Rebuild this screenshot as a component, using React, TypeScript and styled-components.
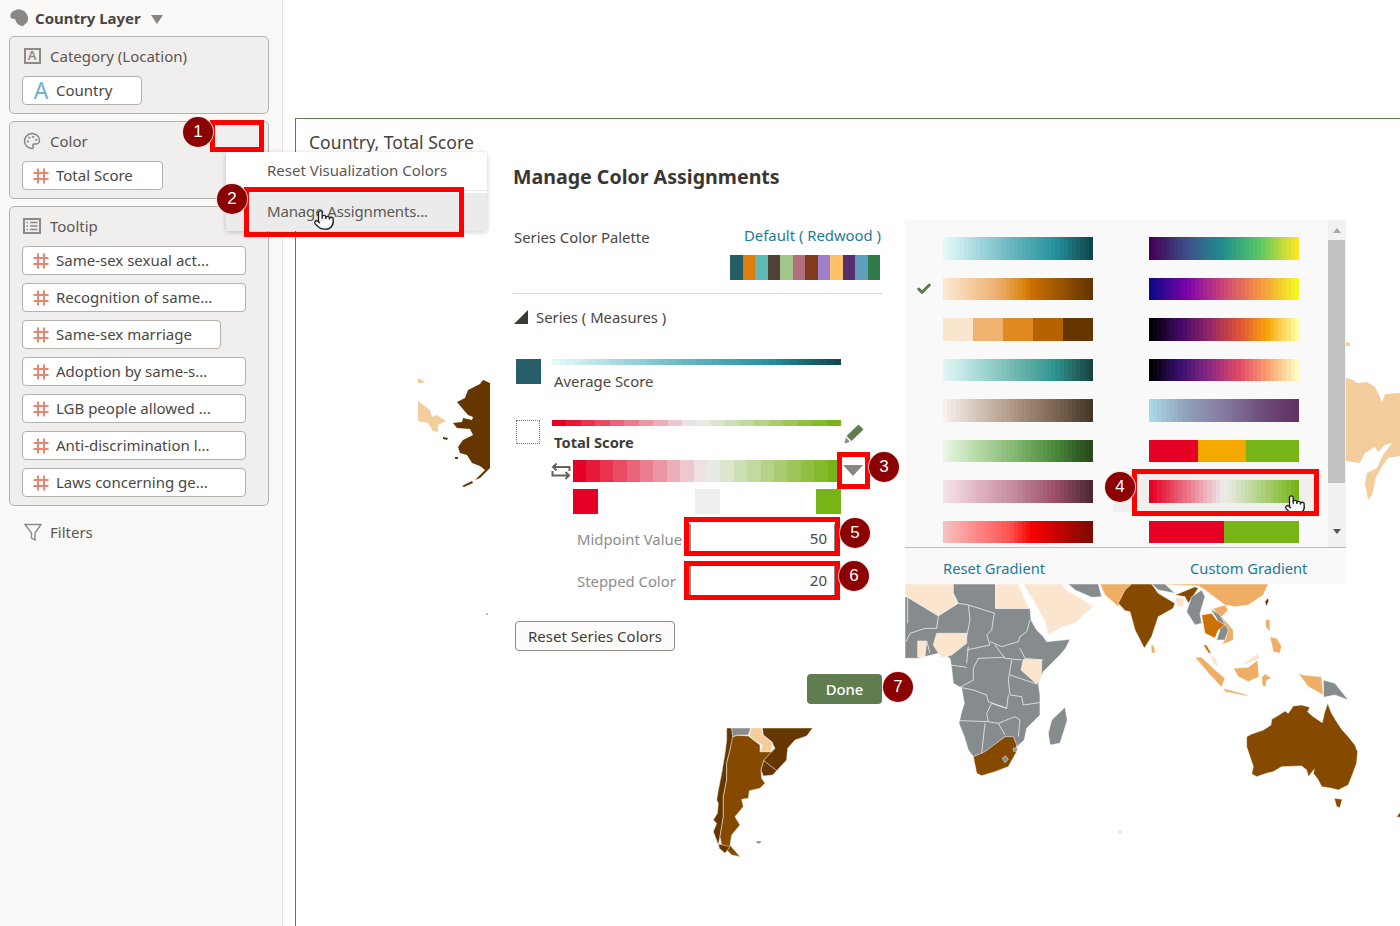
import React from 'react';
import styled, { createGlobalStyle } from 'styled-components';
import { Palette, Pointer, Check } from 'lucide-react';

const Global = createGlobalStyle`
  html, body { margin: 0; padding: 0; background: #fff; }
  body { font-family: "Noto Sans", "Open Sans", sans-serif; color: #4b4743; }
  * { box-sizing: border-box; }
`;

/* ---------- colour ramps ---------- */
const hex = (c: string) => [1, 3, 5].map((i) => parseInt(c.slice(i, i + 2), 16));
const stepped = (stops: string[], n: number, positions?: number[]) => {
  const pos = positions ?? stops.map((_, i) => i / (stops.length - 1));
  const out: string[] = [];
  for (let i = 0; i < n; i++) {
    const t = n === 1 ? 0 : i / (n - 1);
    let k = 0;
    while (k < stops.length - 2 && t > pos[k + 1]) k++;
    const f = (t - pos[k]) / (pos[k + 1] - pos[k]);
    const a = hex(stops[k]);
    const b = hex(stops[k + 1]);
    const m = a.map((v, j) => Math.round(v + (b[j] - v) * f));
    const from = (i / n) * 100;
    const to = ((i + 1) / n) * 100;
    out.push(`rgb(${m.join(',')}) ${from}% ${to}%`);
  }
  return `linear-gradient(90deg, ${out.join(',')})`;
};
const hard = (pairs: [string, number][]) => {
  const total = pairs.reduce((s, p) => s + p[1], 0);
  let acc = 0;
  const out = pairs.map(([c, w]) => {
    const a = (acc / total) * 100;
    acc += w;
    return `${c} ${a}% ${(acc / total) * 100}%`;
  });
  return `linear-gradient(90deg, ${out.join(',')})`;
};

const teal = ['#e4f8fa', '#9ed4db', '#5fb0bb', '#26939f', '#0f474d'];
const rdGn = ['#e60023', '#eeeeee', '#76b417'];

const leftRamps = [
  stepped(teal, 36),
  stepped(['#fbe8d2', '#eeb070', '#d9820f', '#c96f00', '#653600'], 36, [0, 0.35, 0.55, 0.6, 1]),
  hard([['#fae6cf', 1], ['#f0b36f', 1], ['#e08921', 1], ['#b56200', 1], ['#653600', 1]]),
  stepped(['#e0f5f5', '#a3d8d3', '#6cb5ac', '#2f9690', '#1a4443'], 36),
  stepped(['#f7f0ed', '#cfbfb1', '#a9927e', '#7d6753', '#443729'], 36),
  stepped(['#e8f5e0', '#b2d6a2', '#7fb36c', '#4a8a3a', '#26481a'], 36),
  stepped(['#f5e2e8', '#dcb0c0', '#c08598', '#9c5068', '#4e2935'], 36),
  stepped(['#f5c0bf', '#ff8080', '#ff5050', '#f50000', '#7f0a00'], 36, [0, 0.25, 0.45, 0.6, 1]),
];
const rightRamps = [
  stepped(['#440154', '#3b528b', '#21908c', '#5dc863', '#fde725'], 36),
  stepped(['#0d0887', '#7e03a8', '#cc4778', '#f89540', '#f0f921'], 36),
  stepped(['#000004', '#420a68', '#932667', '#dd513a', '#fca50a', '#fcffa4'], 36),
  stepped(['#000004', '#3b0f70', '#8c2981', '#de4968', '#fe9f6d', '#fcfdbf'], 36),
  stepped(['#a9d8e6', '#8f9fb8', '#857aa0', '#6e4f7c', '#643163'], 36),
  hard([['#e60023', 49], ['#f5a800', 48], ['#76b417', 53]]),
  stepped(rdGn, 36),
  hard([['#e60023', 1], ['#76b417', 1]]),
];

/* ---------- shell ---------- */
const Page = styled.div`
  position: relative;
  display: flex;
  width: 1400px;
  height: 926px;
  overflow: hidden;
  background: #fff;
`;
const Sidebar = styled.aside`
  display: flex;
  flex-direction: column;
  width: 283px;
  flex: none;
  padding: 0 13px 0 9px;
  background: #fbf9f8;
  border-right: 1px solid #e6e4e2;
`;
const LayerHeader = styled.div`
  display: flex;
  align-items: center;
  height: 36px;
  padding-left: 1px;
  font-size: 15px;
  font-weight: 700;
  color: #4a4541;
`;
const LayerName = styled.span`
  margin-left: 7px;
`;
const HeaderCaret = styled.span`
  width: 0;
  height: 0;
  margin: 2px 0 0 10px;
  border-left: 6px solid transparent;
  border-right: 6px solid transparent;
  border-top: 9px solid #8a8580;
`;
const Panel = styled.section`
  display: flex;
  flex-direction: column;
  gap: 8px;
  padding: 0 0 8px 12px;
  background: #f1efed;
  border: 1px solid #b4b0ac;
  border-radius: 5px;
  & + & {
    margin-top: 7px;
  }
`;
const PanelTitle = styled.div`
  display: flex;
  align-items: center;
  gap: 9px;
  height: 31px;
  margin: 0 0 0 1px;
  padding: 7px 0 1px;
  font-size: 15px;
  color: #5b5651;
`;
const IconSlot = styled.span`
  display: flex;
  align-items: center;
  justify-content: center;
  width: 18px;
  height: 18px;
  flex: none;
  color: #8a8581;
`;
const LetterBox = styled.span`
  display: flex;
  align-items: center;
  justify-content: center;
  width: 17px;
  height: 16px;
  border: 2px solid #8f8a86;
  font-size: 13px;
  font-weight: 600;
  line-height: 1;
  color: #8f8a86;
`;
const Pill = styled.div<{ $w: number }>`
  display: flex;
  align-items: center;
  width: ${(p) => p.$w}px;
  height: 29px;
  padding: 0 0 2px 10px;
  background: #fff;
  border: 1px solid #b4b0ac;
  border-radius: 4px;
  font-size: 15px;
  color: #4b4743;
  white-space: nowrap;
`;
const PillGlyph = styled.span`
  display: flex;
  align-items: center;
  justify-content: center;
  width: 16px;
  height: 20px;
  margin: 2px 7px 0 0;
  flex: none;
  font-size: 23px;
  line-height: 1;
  color: #6fb0d4;
`;
const Filters = styled(PanelTitle)`
  gap: 8px;
  height: 22px;
  margin: 16px 0 0 15px;
  padding: 0 0 2px;
`;

/* ---------- visualization ---------- */
const Main = styled.main`
  flex: 1;
  min-width: 0;
  padding: 118px 0 0 12px;
`;
const Viz = styled.div`
  position: relative;
  height: 100%;
  border-top: 1px solid #5f7d4f;
  border-left: 1px solid #5f7d4f;
  overflow: hidden;
`;
const VizTitle = styled.h2`
  position: relative;
  margin: 0;
  padding: 10px 0 0 13px;
  font-size: 17.6px;
  line-height: 26px;
  font-weight: 400;
  color: #46423f;
`;
const MapSvg = styled.svg`
  position: absolute;
  inset: 0;
  width: 1104px;
  height: 807px;
`;

/* ---------- dialog ---------- */
const Dialog = styled.div`
  position: absolute;
  left: 194px;
  top: 36px;
  display: flex;
  align-items: flex-start;
`;
const Form = styled.div`
  display: flex;
  flex-direction: column;
  width: 415px;
  height: 573px;
  padding: 8px 23px 0;
  background: #fff;
  font-size: 14.85px;
  color: #4b4743;
`;
const Heading = styled.h1`
  margin: 0;
  font-size: 19.6px;
  line-height: 28px;
  font-weight: 700;
  color: #3a3632;
`;
const PaletteRow = styled.div`
  display: flex;
  justify-content: space-between;
  margin: 34px 0 0 1px;
`;
const RowLabel = styled.span`
  line-height: 24px;
`;
const PaletteRight = styled.div`
  display: flex;
  flex-direction: column;
  align-items: flex-end;
  padding-right: 1px;
`;
const Link = styled.a`
  line-height: 20px;
  color: #1e7a9c;
`;
const PaletteStrip = styled.div`
  display: flex;
  width: 150px;
  height: 25px;
  margin: 10px 1px 0 0;
`;
const PaletteChip = styled.span<{ $c: string }>`
  flex: 1;
  background: ${(p) => p.$c};
`;
const Divider = styled.hr`
  width: 100%;
  height: 1px;
  margin: 13px 0 0;
  border: 0;
  background: #d9d9d9;
`;
const SeriesHead = styled.div`
  display: flex;
  align-items: center;
  gap: 8px;
  height: 24px;
  margin: 12px 0 0 1px;
  padding-bottom: 2px;
`;
const Corner = styled.span`
  width: 0;
  height: 0;
  border-left: 14px solid transparent;
  border-bottom: 14px solid #3d3a36;
`;
const SeriesItem = styled.div<{ $gap: number }>`
  display: flex;
  gap: 11px;
  margin: ${(p) => p.$gap}px 0 0 3px;
`;
const SeriesSwatch = styled.div`
  width: 25px;
  height: 25px;
  flex: none;
  background: #265f69;
`;
const DottedSwatch = styled.div`
  width: 24px;
  height: 24px;
  margin-right: 1px;
  flex: none;
  border: 1px dotted #77736f;
`;
const SeriesBody = styled.div`
  display: flex;
  flex-direction: column;
  width: 289px;
`;
const Ramp = styled.div<{ $bg: string; $h: number }>`
  position: relative;
  width: 100%;
  height: ${(p) => p.$h}px;
  background: ${(p) => p.$bg};
`;
const SeriesLabelRow = styled.div`
  display: flex;
  justify-content: space-between;
  margin: 5px 0 0 2px;
  line-height: 22px;
`;
const BoldLabel = styled.span`
  font-size: 14.7px;
  font-weight: 700;
  color: #3f3b38;
`;
const PencilBox = styled.svg`
  width: 20px;
  height: 20px;
  margin: -7px -23px 0 0;
  flex: none;
`;
const EditorRow = styled.div`
  display: flex;
  align-items: center;
  margin: 7px 0 0 -1px;
`;
const SwapBox = styled.svg`
  width: 20px;
  height: 18px;
  margin-right: 2px;
  flex: none;
`;
const EditorRamp = styled.div`
  width: 268px;
  flex: none;
`;
const DropCaret = styled.span`
  width: 0;
  height: 0;
  flex: none;
  margin: -1px 0 0 2px;
  border-left: 10px solid transparent;
  border-right: 10px solid transparent;
  border-top: 11px solid #8a8580;
`;
const StopsRow = styled.div`
  display: flex;
  justify-content: space-between;
  width: 268px;
  margin: 7px 0 0 21px;
`;
const Stop = styled.span<{ $c: string }>`
  width: 25px;
  height: 25px;
  background: ${(p) => p.$c};
`;
const FieldRow = styled.div<{ $gap: number }>`
  display: flex;
  align-items: center;
  margin: ${(p) => p.$gap}px 0 0 25px;
`;
const FieldLabel = styled.label`
  width: 112px;
  flex: none;
  color: #8c8c8c;
  white-space: nowrap;
`;
const FieldInput = styled.input`
  width: 146px;
  height: 29px;
  padding: 0 7px 2px 0;
  border: 0;
  border-left: 2px solid #8a8a8a;
  border-right: 1px solid #8a8a8a;
  background: #fff;
  font: inherit;
  font-size: 15px;
  color: #4b4743;
  text-align: right;
  outline: none;
`;
const ResetButton = styled.button`
  width: 160px;
  height: 30px;
  margin: 26px 0 0 2px;
  padding: 0;
  background: #fcfbfa;
  border: 1px solid #8e8a86;
  border-radius: 4px;
  font: inherit;
  font-size: 15px;
  color: #3f3b38;
`;
const DoneButton = styled.button`
  align-self: flex-end;
  width: 75px;
  height: 30px;
  margin-top: 23px;
  padding: 0;
  background: #5f7d4f;
  border: 0;
  border-radius: 4px;
  font: inherit;
  font-weight: 500;
  color: #fff;
`;

/* ---------- gradient picker ---------- */
const Picker = styled.div`
  display: flex;
  flex-direction: column;
  width: 441px;
  height: 364px;
  margin-top: 65px;
  background: #f9f9f9;
`;
const PickerBody = styled.div`
  display: flex;
  height: 327px;
`;
const RampGrid = styled.div`
  display: grid;
  flex: 1;
  grid-template-columns: 38px 206px 150px;
  grid-auto-rows: 22.5px;
  row-gap: 18px;
  padding-top: 17px;
  overflow: hidden;
`;
const CheckCell = styled.div`
  display: flex;
  align-items: center;
  padding: 0 0 0 11px;
  color: #5f7d4f;
`;
const RampCell = styled.div<{ $w: number; $on?: boolean }>`
  position: relative;
  width: ${(p) => p.$w}px;
  ${(p) =>
    p.$on
      ? `&::before { content: ''; position: absolute; inset: -9px -20px -9px -36px; background: #f0efee; }`
      : ''}
`;
const Scrollbar = styled.div`
  display: flex;
  flex-direction: column;
  align-items: center;
  width: 18px;
  flex: none;
  background: #f1f1f1;
`;
const ArrowUp = styled.span`
  width: 0;
  height: 0;
  margin: 8px 0 7px;
  border-left: 4px solid transparent;
  border-right: 4px solid transparent;
  border-bottom: 5px solid #a8a8a8;
`;
const Thumb = styled.span`
  width: 17px;
  height: 243px;
  margin-right: 1px;
  background: #c1c1c1;
`;
const ArrowDown = styled.span`
  width: 0;
  height: 0;
  margin-top: 46px;
  border-left: 4px solid transparent;
  border-right: 4px solid transparent;
  border-top: 5px solid #555;
`;
const PickerFooter = styled.div`
  display: flex;
  align-items: center;
  gap: 145px;
  height: 37px;
  padding: 3px 0 0 38px;
  border-top: 1px solid #bdbdbd;
  font-size: 14.7px;
`;

/* ---------- overlays ---------- */
const Menu = styled.div`
  position: absolute;
  left: 226px;
  top: 152px;
  display: flex;
  flex-direction: column;
  width: 261px;
  height: 79px;
  background: #fff;
  border-radius: 3px;
  box-shadow: 0 1px 5px rgba(0, 0, 0, 0.22);
  font-size: 15px;
  color: #5c5854;
`;
const MenuItem = styled.div<{ $active?: boolean }>`
  display: flex;
  align-items: center;
  flex: 1;
  padding: 0 0 2px 41px;
  letter-spacing: ${(p) => (p.$active ? '-0.15px' : '0')};
  background: ${(p) => (p.$active ? '#ebebeb' : 'transparent')};
  border-top: ${(p) => (p.$active ? '2px solid #fff' : '0')};
  box-shadow: ${(p) => (p.$active ? '0 -1px 0 #e8e8e8' : 'none')};
`;
const Callout = styled.div<{ $x: number; $y: number; $w: number; $h: number; $b: number }>`
  position: absolute;
  left: ${(p) => p.$x}px;
  top: ${(p) => p.$y}px;
  width: ${(p) => p.$w}px;
  height: ${(p) => p.$h}px;
  border: ${(p) => p.$b}px solid #ff0000;
`;
const Badge = styled.div<{ $cx: number; $cy: number }>`
  position: absolute;
  left: ${(p) => p.$cx - 15}px;
  top: ${(p) => p.$cy - 15}px;
  display: flex;
  align-items: center;
  justify-content: center;
  width: 30px;
  height: 30px;
  border-radius: 50%;
  background: #8b0000;
  box-shadow: 0 0 0 1px rgba(240, 225, 225, 0.8);
  font-family: "Liberation Sans", Arial, sans-serif;
  font-size: 17px;
  color: #fff;
`;
const Hand = styled.div<{ $x: number; $y: number }>`
  position: absolute;
  left: ${(p) => p.$x}px;
  top: ${(p) => p.$y}px;
  display: flex;
  color: #222;
`;

/* ---------- icons ---------- */
const Hash = () => (
  <svg width="16" height="16" viewBox="0 0 16 16" fill="none" stroke="#e8856f" strokeWidth="2">
    <path d="M5 0.5V15.5M11 0.5V15.5M0.5 5H15.5M0.5 11H15.5" />
  </svg>
);
const LayerBlob = () => (
  <svg width="18" height="18" viewBox="0 0 18 18">
    <path
      d="M0.5 6 C1 3 4 1.5 6 1 C7 0 10 0 12 1 C15 2 17 5 18 8 C18.5 11 17.5 14 15 15 C13.5 17 12 18 10.5 16.5 C8 15.5 6 14 5.5 11 C5 9.5 3 10.5 1.5 9.5 C0.5 8.5 0.3 7.5 0.5 6 Z"
      fill="#8b8785"
    />
  </svg>
);
const ListBox = () => (
  <svg width="18" height="16" viewBox="0 0 18 16" fill="none" stroke="#8f8a86">
    <rect x="1" y="1" width="16" height="14" strokeWidth="2" />
    <path d="M3.5 4.5H5M3.5 8H5M3.5 11.5H5M7 4.5H14.5M7 8H14.5M7 11.5H14.5" strokeWidth="1.4" />
  </svg>
);
const Funnel = () => (
  <svg width="18" height="18" viewBox="0 0 18 18" fill="none" stroke="#8f8a86" strokeWidth="1.4">
    <path d="M1 1.5H17L11 10V17L7.5 15V10Z" />
  </svg>
);
const Pencil = () => (
  <PencilBox viewBox="0 0 20 20">
    <path d="M14.5 0.5L19.5 5.5L7.5 17L2.5 12Z" fill="#5f7d4f" />
    <path d="M1.8 13.5L6 17.8L0.5 19.5Z" fill="#7d9770" />
  </PencilBox>
);
const Swap = () => (
  <SwapBox viewBox="0 0 20 18" fill="none" stroke="#66615c" strokeWidth="2">
    <path d="M2 5H18.5V9M5.5 1.5L2 5L5.5 8.5" />
    <path d="M1.5 9V13.5H18M14.5 10L18 13.5L14.5 17" />
  </SwapBox>
);

/* ---------- map (coordinates traced per reference crop) ---------- */
type Shape = { f: string; p: string };
const GRAY = '#868b8e';
const PEACH = '#fbe5cf';
const MID = '#eeae66';
const TAN = '#f4cd9d';
const BROWN = '#854900';
const DARK = '#653600';
const ORANGE = '#cc7000';

const asia: Shape[] = [
  { f: PEACH, p: '0,12 145,12 145,45 160,70 100,108 5,50 0,48' },
  { f: GRAY, p: '5,50 100,108 160,70 145,40 145,12 272,12 272,85 375,85 378,120 395,150 415,170 425,185 495,178 482,205 465,225 440,250 415,275 400,310 405,345 405,405 385,425 365,445 358,480 335,500 300,470 240,520 205,530 190,510 178,470 162,430 170,395 178,370 170,325 145,310 140,265 135,235 100,220 40,235 0,235 0,52' },
  { f: PEACH, p: '272,12 340,12 372,85 272,85' },
  { f: PEACH, p: '355,12 470,12 490,35 530,55 565,80 535,105 510,130 470,142 430,165 420,125 390,70' },
  { f: GRAY, p: '490,12 580,12 590,50 560,52 510,30' },
  { f: MID, p: '585,12 685,12 650,60 640,80 600,45' },
  { f: MID, p: '740,12 1090,12 1075,45 1030,75 990,80 960,75 900,30 880,18' },
  { f: BROWN, p: '680,12 740,12 760,40 810,70 805,85 760,110 740,170 718,205 690,150 675,95 660,92 640,70 660,30' },
  { f: GRAY, p: '740,12 780,12 810,40 760,30' },
  { f: PEACH, p: '810,50 840,55 830,85 815,75' },
  { f: BROWN, p: '810,45 870,20 880,25 850,70 840,50' },
  { f: GRAY, p: '845,95 860,50 890,30 900,50 885,100 890,130 870,135' },
  { f: MID, p: '925,85 960,75 970,90 950,110 985,150 985,180 950,195 965,170' },
  { f: GRAY, p: '915,85 945,105 970,150 960,180 935,180 945,150 935,115' },
  { f: ORANGE, p: '890,105 920,100 935,120 960,135 940,150 930,175 900,160' },
  { f: ORANGE, p: '895,195 905,195 920,222 910,218' },
  { f: PEACH, p: '915,225 930,232 942,262 925,250' },
  { f: MID, p: '870,232 890,232 925,265 960,295 950,322 920,290' },
  { f: MID, p: '955,325 1030,345 1025,348 960,335' },
  { f: MID, p: '985,265 1030,262 1058,240 1062,290 1030,305 1000,290' },
  { f: PEACH, p: '1005,258 1030,240 1060,220 1065,235 1030,250' },
  { f: MID, p: '1070,290 1082,282 1100,295 1085,300 1082,320 1072,318' },
  { f: MID, p: '1180,280 1195,285 1250,290 1255,345 1210,320 1195,300' },
  { f: GRAY, p: '1255,300 1290,310 1330,360 1290,345 1256,352' },
  { f: MID, p: '738,195 745,195 752,218 740,220' },
  { f: MID, p: '1082,118 1095,120 1095,155 1082,140' },
  { f: MID, p: '1095,170 1115,175 1130,198 1125,220 1105,215' },
  { f: DARK, p: '1080,65 1088,55 1092,60 1085,80' },
  { f: GRAY, p: '480,382 487,420 465,490 435,495 430,460 440,420' },
  { f: BROWN, p: '205,530 240,515 300,470 325,470 335,495 335,515 310,560 270,575 230,587 215,580' },
  { f: GRAY, p: '292,535 302,528 310,538 300,548' },
  { f: GRAY, p: '325,505 338,503 336,514 326,514' },
  { f: PEACH, p: '95,160 185,160 185,190 140,225 110,235 85,195' },
  { f: PEACH, p: '38,183 65,183 60,230 38,232' },
  { f: PEACH, p: '355,238 410,240 410,290 395,312 348,270' },
  { f: BROWN, p: '1025,470 1040,462 1075,450 1098,435 1100,418 1122,405 1140,393 1150,400 1165,378 1190,375 1215,382 1208,395 1225,410 1252,428 1258,400 1268,370 1280,400 1295,425 1312,450 1330,470 1350,495 1358,515 1355,550 1340,590 1330,615 1300,630 1280,625 1250,620 1240,600 1225,580 1228,568 1210,590 1205,570 1190,558 1130,560 1105,575 1085,580 1055,590 1040,582 1045,560 1035,530 1025,500' },
  { f: BROWN, p: '1288,655 1312,658 1305,683 1295,680' },
  { f: BROWN, p: '1475,710 1485,697 1495,715' },
];
const africaLines = [
  '8,50 8,130',
  '100,108 95,145 60,145 15,160 3,185',
  '160,70 190,75 270,100',
  '190,75 195,120 185,170',
  '268,100 260,150 245,165 255,195 185,210',
  '255,185 290,200 340,185 345,170',
  '375,120 365,155 345,170',
  '345,205 360,235 415,240',
  '270,195 300,235 350,240',
  '300,232 220,235 205,265 205,300 165,322',
  '135,255 185,262',
  '165,322 205,330 245,345 250,365 305,385',
  '320,240 310,300 315,345 350,350 355,375 405,368',
  '310,345 305,385 260,370 245,400 250,425 165,422',
  '250,425 280,430 330,410 345,420 340,470',
  '240,430 230,520',
  '280,430 300,465',
  '315,285 395,312',
  '190,200 185,250',
  '65,183 75,220',
];
const southAmerica: Shape[] = [
  { f: DARK, p: '140,84 155,84 160,110 150,150 140,190 140,240 130,290 130,350 120,410 115,435 100,395 110,370 100,360 112,340 115,310 110,300 115,270 125,220 135,160 140,120' },
  { f: BROWN, p: '158,110 172,106 205,108 240,135 240,155 278,155 252,180 243,210 245,235 255,250 240,265 208,272 205,295 185,298 190,320 165,350 180,375 155,405 150,435 180,470 155,465 125,435 120,410 130,350 130,290 140,240 140,190 150,150' },
  { f: DARK, p: '247,84 398,84 380,108 345,120 323,145 320,180 290,212 278,225 250,228 243,210 252,180 285,145 275,125 250,105' },
  { f: TAN, p: '215,84 245,84 248,105 278,128 272,155 240,155 248,135 220,120 208,105' },
  { f: GRAY, p: '155,84 212,84 205,105 172,105 158,110' },
  { f: DARK, p: '115,432 150,440 135,460 118,445' },
];
const alaska = [
  '490,383 483,380 480,384 468,390 465,398 457,402 462,408 468,415 473,417 472,420 463,418 462,422 453,423 457,428 470,429 473,435 463,440 458,447 460,453 467,455 472,463 480,466 485,470 480,475 475,480 480,478 490,468',
  '443,437 448,438 447,440 443,439',
  '455,457 458,457 458,459 455,459',
  '462,486 472,481 473,483 464,487',
];
const chukotka = [
  '418,401 430,410 432,417 437,415 446,421 438,425 438,432 433,431 428,423 418,421',
  '418,378 424,381 423,383 418,383',
];
const siberia = [
  '1346,378 1353,380 1357,383 1367,382 1375,387 1379,395 1382,402 1385,394 1400,393 1400,456 1388,458 1383,465 1376,477 1372,495 1368,500 1365,483 1367,473 1377,468 1383,455 1392,443 1385,445 1378,452 1375,447 1365,453 1360,463 1346,461',
  '1346,342 1350,343 1350,346 1346,346',
];

const WorldMap = () => (
  <MapSvg viewBox="296 119 1104 807">
    {chukotka.map((p) => <polygon key={p} points={p} fill={TAN} />)}
    {alaska.map((p) => <polygon key={p} points={p} fill={DARK} />)}
    {siberia.map((p) => <polygon key={p} points={p} fill={TAN} />)}
    <circle cx="487" cy="614" r="0.7" fill="#555" />
    <circle cx="1120" cy="832" r="0.7" fill="#999" />
    <g transform="translate(905 580) scale(0.3333)">
      {asia.map((s) => (
        <polygon key={s.p} points={s.p} fill={s.f} stroke="#fff" strokeWidth="1.6" strokeLinejoin="round" />
      ))}
      {africaLines.map((p) => (
        <polyline key={p} points={p} fill="none" stroke="#eef0f0" strokeWidth="2.4" />
      ))}
    </g>
    <g transform="translate(680 700) scale(0.3333)">
      {southAmerica.map((s) => (
        <polygon key={s.p} points={s.p} fill={s.f} stroke="#f4ece2" strokeWidth="1.6" strokeLinejoin="round" />
      ))}
      <polyline points="252,182 290,212" fill="none" stroke="#f4ece2" strokeWidth="2" />
      <polygon points="228,424 244,424 240,430 232,430" fill="#868b8e" />
    </g>
  </MapSvg>
);

/* ---------- data ---------- */
const paletteChips = ['#245e66', '#df7e10', '#5fb9b4', '#4e4237', '#a3c78a', '#b46f7f', '#7f3d1c', '#9f7fc9', '#fdc168', '#572f6f', '#5ea0bb', '#2f7a49'];
const tooltipPills: [string, number][] = [
  ['Same-sex sexual act...', 224],
  ['Recognition of same...', 224],
  ['Same-sex marriage', 199],
  ['Adoption by same-s...', 224],
  ['LGB people allowed ...', 224],
  ['Anti-discrimination l...', 224],
  ['Laws concerning ge...', 224],
];
const callouts = [
  { x: 210, y: 120, w: 54, h: 32, b: 5 },
  { x: 244, y: 187, w: 220, h: 50, b: 5 },
  { x: 837, y: 452, w: 33, h: 37, b: 5 },
  { x: 1132, y: 469, w: 187, h: 47, b: 5 },
  { x: 684, y: 517, w: 156, h: 39, b: 5 },
  { x: 684, y: 561, w: 156, h: 39, b: 5 },
];
const badges = [
  { n: 1, x: 198, y: 132 },
  { n: 2, x: 232, y: 199 },
  { n: 3, x: 884, y: 467 },
  { n: 4, x: 1120, y: 487 },
  { n: 5, x: 855, y: 533 },
  { n: 6, x: 854, y: 576 },
  { n: 7, x: 898, y: 687 },
];

export default function App() {
  return (
    <Page>
      <Global />
      <Sidebar>
        <LayerHeader>
          <LayerBlob />
          <LayerName>Country Layer</LayerName>
          <HeaderCaret />
        </LayerHeader>
        <Panel>
          <PanelTitle>
            <IconSlot><LetterBox>A</LetterBox></IconSlot>
            Category (Location)
          </PanelTitle>
          <Pill $w={120}>
            <PillGlyph>A</PillGlyph>
            Country
          </Pill>
        </Panel>
        <Panel>
          <PanelTitle>
            <IconSlot><Palette size={18} strokeWidth={2} /></IconSlot>
            Color
          </PanelTitle>
          <Pill $w={141}>
            <PillGlyph><Hash /></PillGlyph>
            Total Score
          </Pill>
        </Panel>
        <Panel>
          <PanelTitle>
            <IconSlot><ListBox /></IconSlot>
            Tooltip
          </PanelTitle>
          {tooltipPills.map(([t, w]) => (
            <Pill key={t} $w={w}>
              <PillGlyph><Hash /></PillGlyph>
              {t}
            </Pill>
          ))}
        </Panel>
        <Filters>
          <IconSlot><Funnel /></IconSlot>
          Filters
        </Filters>
      </Sidebar>

      <Main>
        <Viz>
          <WorldMap />
          <VizTitle>Country, Total Score</VizTitle>
          <Dialog>
            <Form>
              <Heading>Manage Color Assignments</Heading>
              <PaletteRow>
                <RowLabel>Series Color Palette</RowLabel>
                <PaletteRight>
                  <Link>Default ( Redwood )</Link>
                  <PaletteStrip>
                    {paletteChips.map((c) => <PaletteChip key={c} $c={c} />)}
                  </PaletteStrip>
                </PaletteRight>
              </PaletteRow>
              <Divider />
              <SeriesHead>
                <Corner />
                Series ( Measures )
              </SeriesHead>
              <SeriesItem $gap={29}>
                <SeriesSwatch />
                <SeriesBody>
                  <Ramp $h={6} $bg={stepped(teal, 40)} />
                  <SeriesLabelRow>Average Score</SeriesLabelRow>
                </SeriesBody>
              </SeriesItem>
              <SeriesItem $gap={28}>
                <DottedSwatch />
                <SeriesBody>
                  <Ramp $h={6} $bg={stepped(rdGn, 20)} />
                  <SeriesLabelRow>
                    <BoldLabel>Total Score</BoldLabel>
                    <Pencil />
                  </SeriesLabelRow>
                  <EditorRow>
                    <Swap />
                    <EditorRamp><Ramp $h={22} $bg={stepped(rdGn, 20)} /></EditorRamp>
                    <DropCaret />
                  </EditorRow>
                  <StopsRow>
                    <Stop $c="#e60023" />
                    <Stop $c="#eeeeee" />
                    <Stop $c="#76b417" />
                  </StopsRow>
                  <FieldRow $gap={10}>
                    <FieldLabel>Midpoint Value</FieldLabel>
                    <FieldInput readOnly value="50" />
                  </FieldRow>
                  <FieldRow $gap={13}>
                    <FieldLabel>Stepped Color</FieldLabel>
                    <FieldInput readOnly value="20" />
                  </FieldRow>
                </SeriesBody>
              </SeriesItem>
              <ResetButton>Reset Series Colors</ResetButton>
              <DoneButton>Done</DoneButton>
            </Form>
            <Picker>
              <PickerBody>
                <RampGrid>
                  {leftRamps.map((bg, i) => (
                    <React.Fragment key={i}>
                      <CheckCell>{i === 1 && <Check size={16} strokeWidth={4.5} />}</CheckCell>
                      <RampCell $w={150}><Ramp $h={22.5} $bg={bg} /></RampCell>
                      <RampCell $w={150} $on={i === 6}><Ramp $h={22.5} $bg={rightRamps[i]} /></RampCell>
                    </React.Fragment>
                  ))}
                </RampGrid>
                <Scrollbar>
                  <ArrowUp />
                  <Thumb />
                  <ArrowDown />
                </Scrollbar>
              </PickerBody>
              <PickerFooter>
                <Link>Reset Gradient</Link>
                <Link>Custom Gradient</Link>
              </PickerFooter>
            </Picker>
          </Dialog>
        </Viz>
      </Main>

      <Menu>
        <MenuItem>Reset Visualization Colors</MenuItem>
        <MenuItem $active>Manage Assignments...</MenuItem>
      </Menu>
      <Hand $x={313} $y={209}><Pointer size={22} fill="#fff" strokeWidth={1.5} /></Hand>
      <Hand $x={1284} $y={494}><Pointer size={22} fill="#fff" strokeWidth={1.5} /></Hand>
      {callouts.map((c) => (
        <Callout key={`${c.x}-${c.y}`} $x={c.x} $y={c.y} $w={c.w} $h={c.h} $b={c.b} />
      ))}
      {badges.map((b) => (
        <Badge key={b.n} $cx={b.x} $cy={b.y}>{b.n}</Badge>
      ))}
    </Page>
  );
}
